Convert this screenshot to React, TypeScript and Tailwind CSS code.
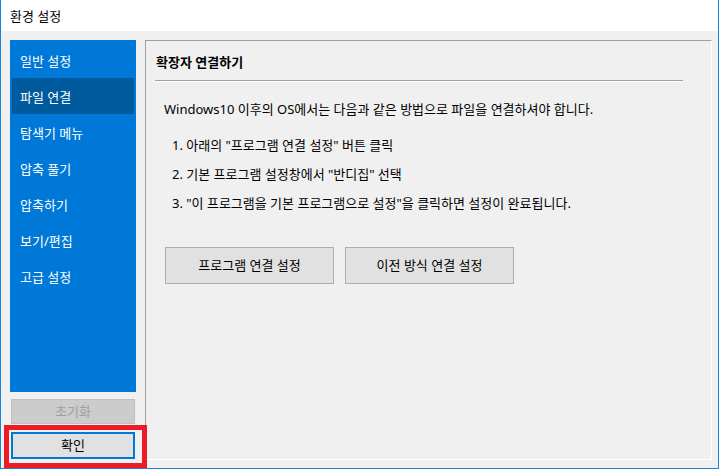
import React from "react";

const font = { fontFamily: '"Noto Sans", "Noto Sans CJK KR", sans-serif' };

export default function App() {
  const items = ["일반 설정", "파일 연결", "탐색기 메뉴", "압축 풀기", "압축하기", "보기/편집", "고급 설정"];
  return (
    <div className="relative w-[719px] h-[469px] bg-[#f0f0f0] border-x border-b border-[#1883d7] text-[13px] text-black flex flex-col overflow-hidden" style={font}>
      <div className="h-[31px] bg-white flex items-center pl-[9px] pt-[2px] shrink-0">환경 설정</div>
      <div className="flex pl-[9px] flex-1">
        <div className="w-[126px] flex flex-col pt-[9px]">
          <div className="h-[352px] bg-[#0078d7] pt-[2px] flex flex-col">
            {items.map((t, i) => (
              <div
                key={t}
                className={
                  "h-[36px] flex items-center pt-[3px] text-white " +
                  (i === 1 ? "bg-[#005a9e] mx-[2px] pl-[8px]" : "pl-[10px]")
                }
              >
                {t}
              </div>
            ))}
          </div>
          <div className="mt-[7px] ml-[1px] w-[124px] h-[25px] bg-[#cccccc] border border-[#bfbfbf] text-[#a0a0a0] flex items-center justify-center pt-[1px]">
            초기화
          </div>
          <div className="mt-[8px] ml-[1px] w-[124px] h-[27px] bg-[#e1e1e1] border-2 border-[#0078d7] flex items-center justify-center pt-[1px]">
            확인
          </div>
        </div>
        <div className="ml-[9px] mt-[9px] w-[567px] h-[420px] border-l border-t border-[#a0a0a0] border-r border-b border-r-white border-b-white flex flex-col">
          <div className="pl-[10px] pt-[12px] h-[29px] font-bold leading-[18px]">확장자 연결하기</div>
          <div className="ml-[9px] w-[528px] border-t border-[#a0a0a0] border-b border-b-white h-[2px] mt-[10px]"></div>
          <div className="pl-[18px] mt-[18px] leading-[18px]">
            Windows10 이후의 OS에서는 다음과 같은 방법으로 파일을 연결하셔야 합니다.
          </div>
          <div className="pl-[26px] mt-[18px] flex flex-col gap-[11px] leading-[18px]">
            <div>1. 아래의 "프로그램 연결 설정" 버튼 클릭</div>
            <div>2. 기본 프로그램 설정창에서 "반디집" 선택</div>
            <div>3. "이 프로그램을 기본 프로그램으로 설정"을 클릭하면 설정이 완료됩니다.</div>
          </div>
          <div className="pl-[19px] mt-[35px] flex gap-[11px]">
            <div className="w-[169px] h-[37px] bg-[#e1e1e1] border border-[#adadad] flex items-center justify-center pt-[1px]">
              프로그램 연결 설정
            </div>
            <div className="w-[169px] h-[37px] bg-[#e1e1e1] border border-[#adadad] flex items-center justify-center pt-[1px]">
              이전 방식 연결 설정
            </div>
          </div>
        </div>
      </div>
      <div className="absolute left-[3px] top-[425px] w-[143px] h-[43px] border-[5px] border-[#ed1c24]"></div>
    </div>
  );
}
